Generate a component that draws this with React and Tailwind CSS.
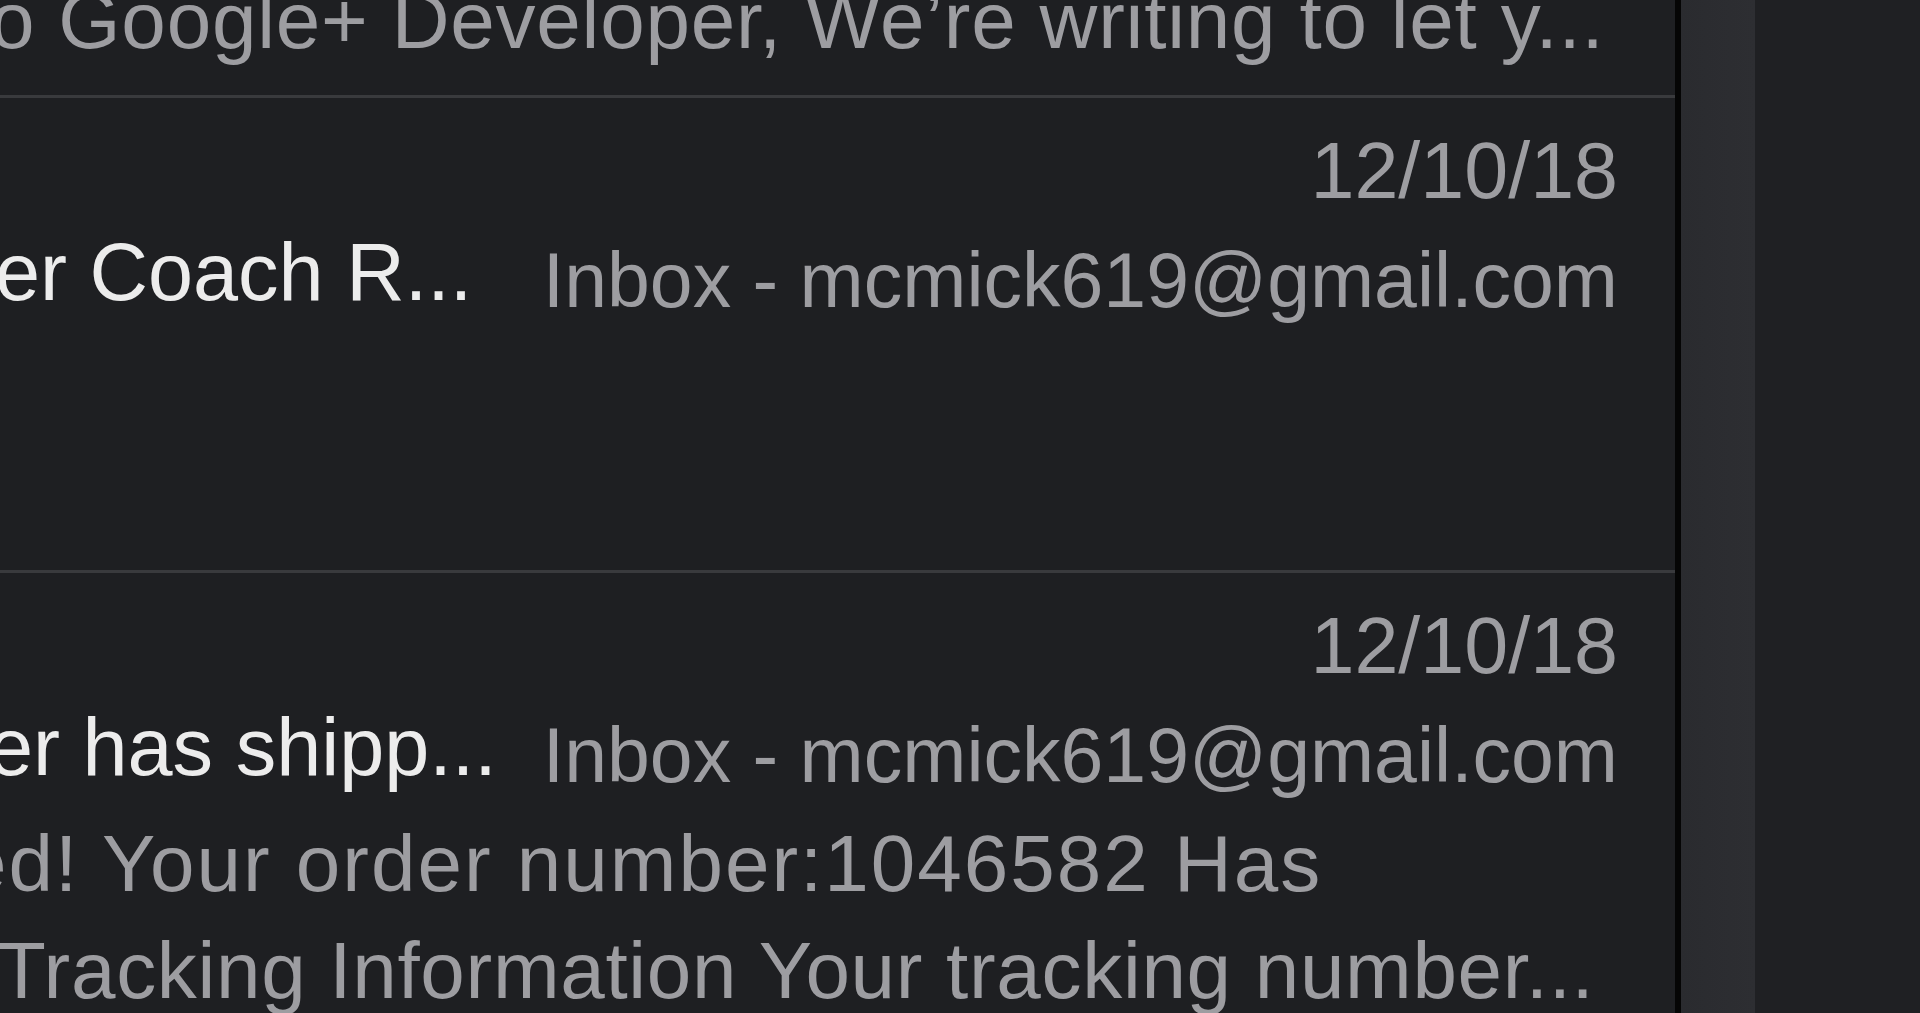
import React from "react";

const rows = [
  {
    subject: "Google+ APIs shutting down March 7, 2019",
    subjectShift: "-ml-[2px]",
    date: "12/10/18",
    body: [
      { text: "Google+ APIs shutting down March 7, 2019 Hello", shift: "ml-0 tracking-[0.8px]" },
      { text: "o Google+ Developer, We\u2019re writing to let y...", shift: "-ml-[10px] tracking-[0.8px]" },
    ],
  },
  {
    subject: "er Coach R...",
    subjectShift: "-ml-[5px]",
    date: "12/10/18",
    body: [
      { text: "", shift: "ml-0" },
      { text: "", shift: "ml-0" },
    ],
  },
  {
    subject: "er has shipp...",
    subjectShift: "-ml-[12px]",
    date: "12/10/18",
    body: [
      { text: "ed! Your order number:1046582 Has", shift: "-ml-[38px] tracking-[2px]" },
      { text: "Tracking Information Your tracking number...", shift: "-ml-[3px] tracking-[0.7px]" },
    ],
  },
];

function MessageRow({ row }) {
  return (
    <div className="pt-[28px] pb-[21px] pr-[57px]">
      <div className="h-[96px] leading-[90px] text-right text-[79px] text-[#9d9da1] whitespace-nowrap">
        {row.date}
      </div>
      <div className="flex justify-between items-start h-[108px]">
        <div
          className={`leading-[100px] text-[81px] text-[#ececec] whitespace-nowrap ${row.subjectShift}`}
        >
          {row.subject}
        </div>
        <div className="shrink-0 pt-[8px] leading-[100px] text-[77px] text-[#9d9da1] whitespace-nowrap">
          Inbox - mcmick619@gmail.com
        </div>
      </div>
      <div className="mt-[5px]">
        {row.body.map((line, i) => (
          <div
            key={i}
            className={`h-[107px] leading-[107px] text-[80px] text-[#9d9da1] whitespace-nowrap ${line.shift}`}
          >
            {line.text}
          </div>
        ))}
      </div>
    </div>
  );
}

export default function App() {
  return (
    <div className="flex h-[1013px] w-full overflow-hidden bg-[#1f2023] font-['Liberation_Sans',Arial,sans-serif]">
      {/* message list */}
      <div className="w-[1675px] shrink-0 overflow-hidden bg-[#1e1f22]">
        <div className="-mt-[377px]">
          {rows.map((row, i) => (
            <div key={i}>
              <MessageRow row={row} />
              <div className="h-[3px] bg-[#393a3d]" />
            </div>
          ))}
        </div>
      </div>
      {/* split divider */}
      <div className="w-[6px] shrink-0 bg-[#050505]" />
      <div className="w-[74px] shrink-0 bg-gradient-to-r from-[#2a2b2f] to-[#2d2e32]" />
      <div className="flex-1 bg-[#1f2023]" />
    </div>
  );
}
